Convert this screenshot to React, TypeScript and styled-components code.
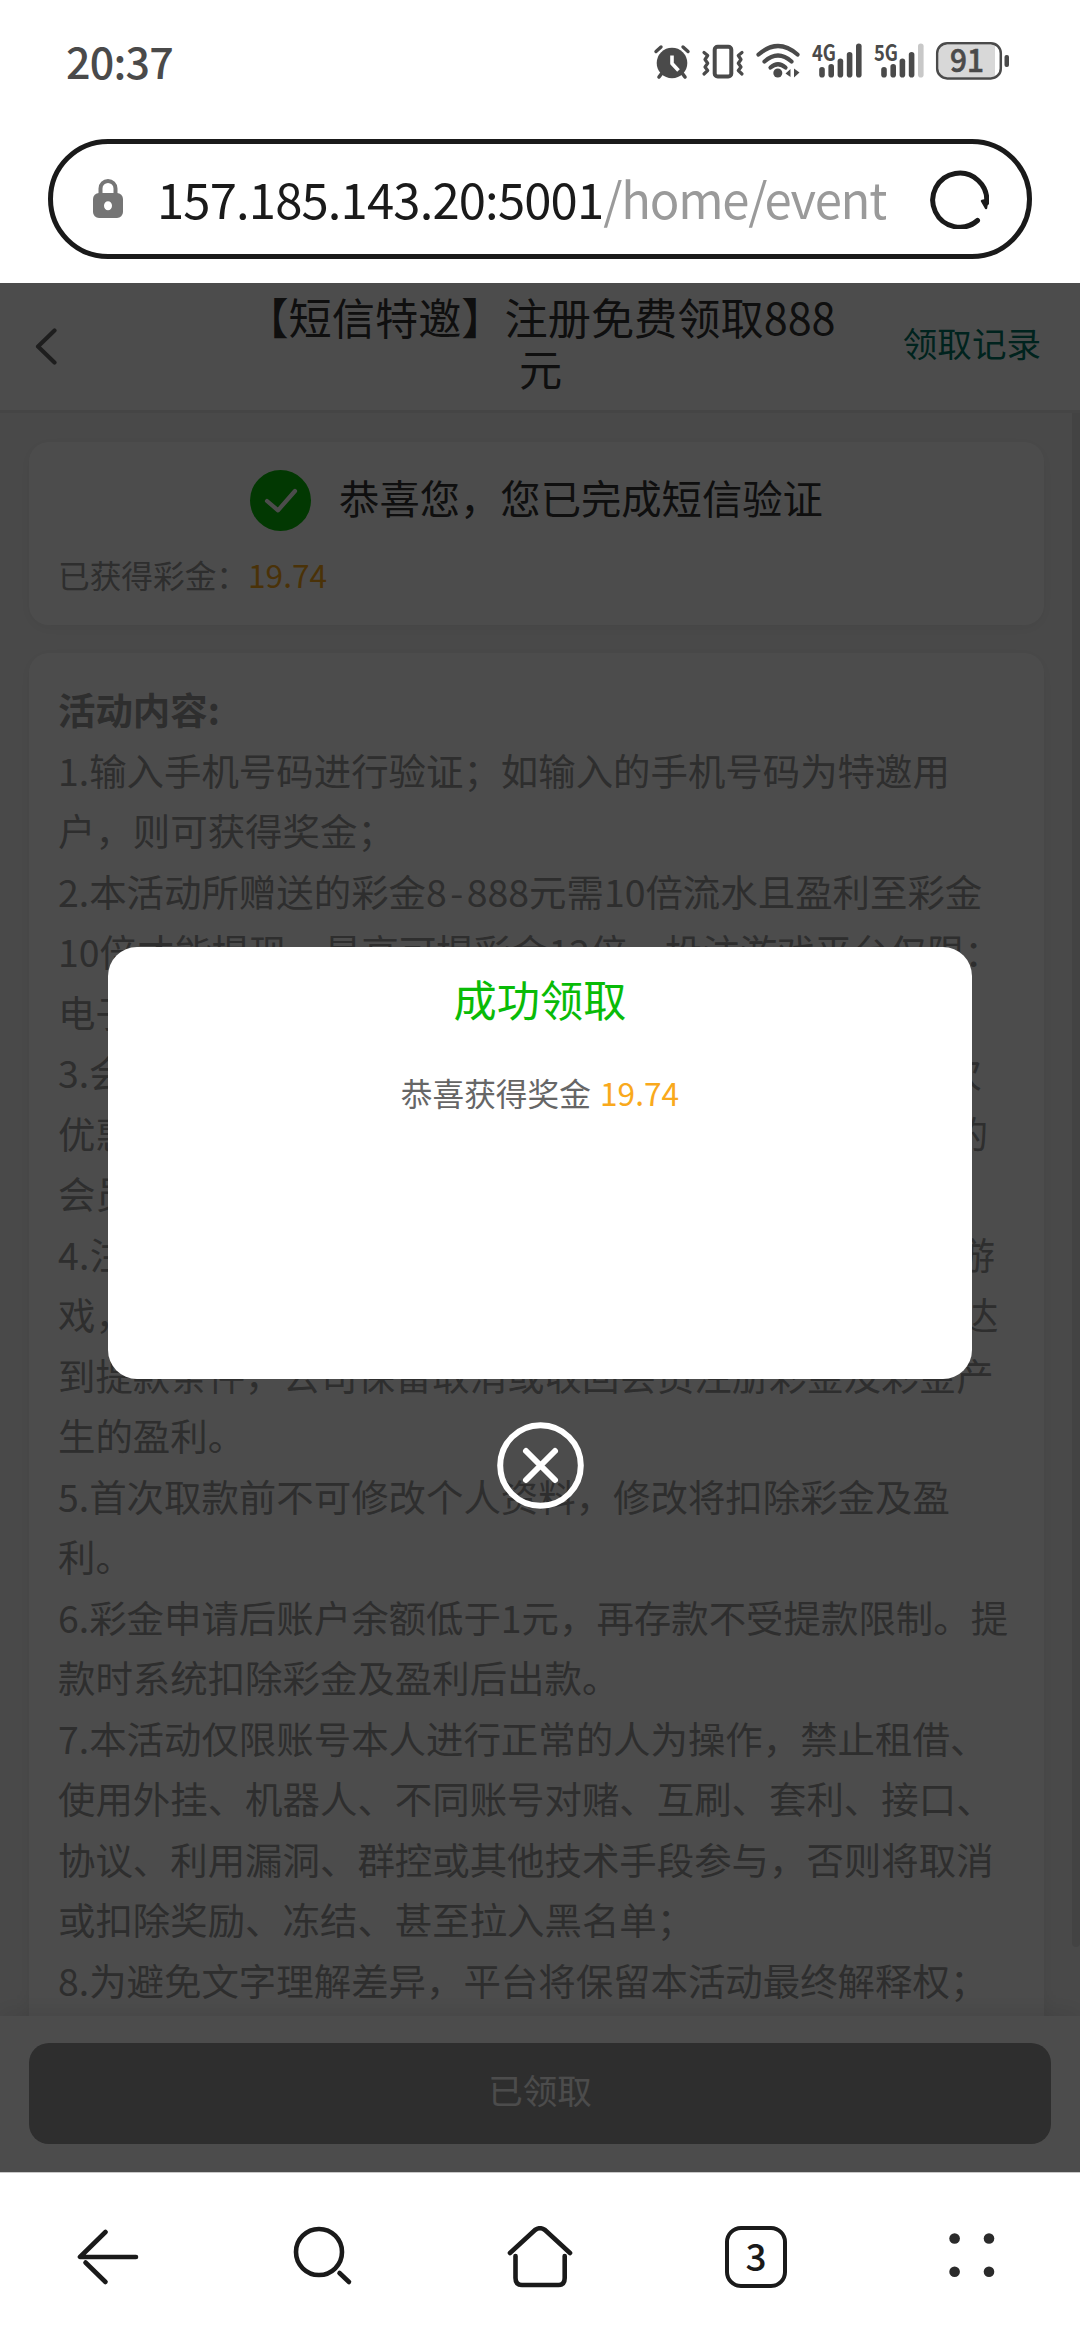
import React from "react";
import styled, { createGlobalStyle } from "styled-components";

const GlobalStyle = createGlobalStyle`
  * { box-sizing: border-box; }
  html, body { margin: 0; padding: 0; background: #fff; }
  body {
    width: 1080px;
    height: 2340px;
    overflow: hidden;
    font-family: "Noto Sans CJK SC", "Noto Sans", sans-serif;
  }
`;

const Screen = styled.div`
  width: 1080px;
  height: 2340px;
  display: flex;
  flex-direction: column;
  background: #fff;
`;

const StatusBar = styled.div`
  height: 139px;
  padding: 42px 71px 0 66px;
  display: flex;
  justify-content: space-between;
  align-items: flex-start;
`;

const Clock = styled.div`
  margin-top: -2px;
  font-size: 43px;
  line-height: 40px;
  letter-spacing: -0.8px;
  color: #4a4a4a;
  font-weight: 500;
`;

const StatusIcons = styled.div`
  display: flex;
  align-items: flex-start;
  gap: 12px;
  svg { display: block; overflow: visible; }
`;

const AddressBar = styled.div`
  height: 120px;
  margin: 0 48px 24px;
  padding: 0 38px 0 40px;
  border: 5px solid #1a1a1a;
  border-radius: 60px;
  display: flex;
  align-items: center;
  flex-shrink: 0;
  svg { display: block; flex-shrink: 0; }
`;

const Url = styled.div`
  width: 730px;
  margin-left: 34px;
  margin-right: 43px;
  padding-bottom: 3px;
  overflow: hidden;
  white-space: nowrap;
  font-size: 49px;
  line-height: 80px;
  letter-spacing: -0.85px;
  color: #1a1a1a;
`;

const UrlPath = styled.span`
  color: #9a9a9a;
  letter-spacing: -1.25px;
`;

const Page = styled.div`
  position: relative;
  height: 1889px;
  flex-shrink: 0;
  overflow: hidden;
  display: flex;
  flex-direction: column;
  background: #f5f5f5;
`;

const Header = styled.div`
  height: 130px;
  flex-shrink: 0;
  padding: 0 39px 0 34px;
  border-bottom: 3px solid #e6e6e6;
  background: #fff;
  display: grid;
  grid-template-columns: 140px 1fr 140px;
  align-items: center;
`;

const Title = styled.div`
  width: 640px;
  justify-self: center;
  margin-left: 6px;
  padding-bottom: 9px;
  text-align: center;
  white-space: nowrap;
  font-size: 43.2px;
  line-height: 51px;
  color: #333;
`;

const HeaderLink = styled.div`
  padding-bottom: 10px;
  justify-self: end;
  white-space: nowrap;
  font-size: 34.56px;
  line-height: 46px;
  color: #007564;
`;

const Content = styled.div`
  flex: 1;
  min-height: 0;
  overflow: hidden;
  padding: 29px 36.5px 0 29px;
  display: flex;
  flex-direction: column;
  gap: 28px;
`;

const Card = styled.div`
  flex-shrink: 0;
  border-radius: 20px;
  background: #fff;
  box-shadow: 0 3px 16px rgba(0, 0, 0, 0.06);
`;

const StatusCard = styled(Card)`
  height: 183px;
  padding: 28px 29px;
`;

const VerifyRow = styled.div`
  height: 61px;
  display: flex;
  justify-content: center;
  align-items: center;
  gap: 28.5px;
`;

const VerifyText = styled.div`
  padding-bottom: 7px;
  font-size: 40.32px;
  line-height: 54px;
  color: #333;
`;

const BonusRow = styled.div`
  margin-top: 20px;
  font-size: 31.68px;
  line-height: 46px;
  color: #999;
`;

const Amount = styled.span`
  color: #f9a91c;
`;

const RulesCard = styled(Card)`
  height: 1500px;
  padding: 26px 29px;
  font-size: 37.44px;
  color: #999;
`;

const RulesHeading = styled.div`
  line-height: 60.5px;
  font-weight: 700;
`;

const RuleLine = styled.div<{ $tracking?: number }>`
  line-height: 60.5px;
  white-space: nowrap;
  letter-spacing: ${(p) => p.$tracking ?? 0}px;
`;

const RangeDash = styled.span`
  display: inline-block;
  width: 20px;
  text-align: center;
`;

const ScrollThumb = styled.div`
  position: absolute;
  right: 0;
  top: 130px;
  width: 8px;
  height: 1534px;
  border-radius: 0 0 4px 4px;
  background: #e0e0e0;
`;

const Footer = styled.div`
  height: 156px;
  flex-shrink: 0;
  padding: 27px 29px 28px;
  background: #fff;
  box-shadow: 0 -3px 24px rgba(0, 0, 0, 0.1);
  z-index: 1;
`;

const ClaimedButton = styled.div`
  height: 101px;
  padding-bottom: 9px;
  border-radius: 20px;
  background: #999;
  color: #fff;
  font-size: 34.56px;
  display: flex;
  align-items: center;
  justify-content: center;
`;

const Overlay = styled.div`
  position: absolute;
  inset: 0;
  z-index: 2;
  padding-top: 664px;
  background: rgba(0, 0, 0, 0.7);
  display: flex;
  flex-direction: column;
  align-items: center;
  gap: 43px;
`;

const Modal = styled.div`
  width: 864px;
  height: 432px;
  padding-top: 25px;
  border-radius: 29px;
  background: #fff;
  text-align: center;
`;

const ModalTitle = styled.div`
  font-size: 43.2px;
  line-height: 52px;
  color: #09bb07;
`;

const ModalText = styled.div`
  margin-top: 44px;
  font-size: 31.68px;
  line-height: 48px;
  word-spacing: 2px;
  color: #666;
`;

const NavBar = styled.div`
  height: 168px;
  padding-top: 53px;
  border-top: 1px solid #c8c8c8;
  display: grid;
  grid-template-columns: repeat(5, 1fr);
  justify-items: center;
  align-items: start;
  svg { display: block; }
`;

const TabCount = styled.div`
  width: 62px;
  height: 62px;
  border: 4.5px solid #1a1a1a;
  border-radius: 16px;
  padding-bottom: 5px;
  display: flex;
  align-items: center;
  justify-content: center;
  font-size: 37px;
  line-height: 48px;
  font-weight: 500;
  color: #1a1a1a;
`;

const INK = "#4a4a4a";

const AlarmIcon = () => (
  <svg width="36" height="38" viewBox="654 42 36 38" fill="none" stroke={INK} strokeLinecap="round">
    <circle cx="672" cy="63" r="15.3" fill={INK} stroke="none" />
    <path d="M656 51.5l5-4.5M683 47l5 4.5" strokeWidth="3.4" />
    <path d="M662 73l-3 4M682 73l3 4" strokeWidth="3.6" />
    <path d="M672 55.500v8l6.500 7" stroke="#fff" strokeWidth="3.600" strokeLinejoin="round" strokeLinecap="butt" />
  </svg>
);

const VibrateIcon = () => (
  <svg width="42" height="38" viewBox="702 42 42 38" fill="none" stroke={INK} strokeLinecap="round" strokeLinejoin="round">
    <rect x="714.7" y="46.800" width="16.6" height="29.600" rx="3" strokeWidth="4" />
    <path d="M704 52.500l3.700 3-2.700 4 2.700 3.800-2.700 3.700 2.700 3.500-3.700 3.500" strokeWidth="3.200" />
    <path d="M742 52.500l-3.700 3 2.700 4-2.700 3.800 2.700 3.700-2.700 3.500 3.700 3.500" strokeWidth="3.200" />
  </svg>
);

const WifiIcon = () => (
  <svg width="44" height="38" viewBox="756 42 44 38" fill="none" stroke={INK} strokeWidth="4.200" strokeLinecap="round">
    <path d="M758.500 54.500Q778 37.500 797.500 54.500" />
    <path d="M764.500 61.500Q778 49.500 791.500 61.500" />
    <path d="M770.500 67.500Q778 61 785.500 67.500" />
    <circle cx="777.800" cy="73" r="4.500" fill={INK} stroke="none" />
    <path d="M785.500 73.500l5-4.500v8zM799.500 72.500l-5.500-4v9z" fill={INK} stroke="none" />
  </svg>
);

const SignalIcon = ({ label, x, weak }: { label: string; x: number; weak?: boolean }) => (
  <svg width="50" height="38" viewBox="812 42 50 38">
    <text
      x="812"
      y="60.500"
      fontSize="22.500"
      fontWeight="700"
      fontFamily='"Noto Sans CJK SC", sans-serif'
      textLength="24"
      lengthAdjust="spacingAndGlyphs"
      fill={INK}
    >
      {label}
    </text>
    {[67, 64, 58.500, 52, 43.500].map((top, i) => (
      <rect
        key={i}
        x={x + i * 9.2}
        y={top}
        width="5.600"
        height={77.500 - top}
        rx="2.800"
        fill={weak && i === 4 ? "#c8c8c8" : INK}
      />
    ))}
  </svg>
);

const BatteryIcon = () => (
  <svg width="73" height="38" viewBox="936 42 73 38">
    <path d="M945 45H995V77H945Q939 77 939 69V53Q939 45 945 45Z" fill="#d8d8d8" />
    <rect x="937.200" y="43.200" width="63.600" height="35.200" rx="10" fill="none" stroke={INK} strokeWidth="2.500" />
    <rect x="1004.500" y="55" width="4.500" height="12" rx="2" fill={INK} />
    <text
      x="967"
      y="72"
      fontSize="32"
      fontWeight="500"
      textAnchor="middle"
      textLength="34"
      lengthAdjust="spacingAndGlyphs"
      fontFamily='"Noto Sans CJK SC", sans-serif'
      fill={INK}
      stroke={INK}
      strokeWidth="0.600"
    >
      91
    </text>
  </svg>
);

const LockIcon = () => (
  <svg width="30" height="40" viewBox="93 180 30 40">
    <path d="M100.500 196v-6.500a7.500 7.500 0 0 1 15 0V196" fill="none" stroke="#757575" strokeWidth="4" />
    <path
      fillRule="evenodd"
      fill="#757575"
      d="M99 194h18a6 6 0 0 1 6 6v13a6 6 0 0 1-6 6H99a6 6 0 0 1-6-6v-13a6 6 0 0 1 6-6zM108 202.200a4 4.500 0 1 0 0 9 4 4.500 0 1 0 0-9z"
    />
  </svg>
);

const ReloadIcon = () => (
  <svg width="60" height="60" viewBox="929 169 60 60" fill="none" stroke="#1a1a1a" strokeWidth="5" strokeLinecap="round">
    <path d="M977.500 220.500A27 27 0 1 1 986.600 203" />
    <path d="M982 201l5-1-1 8z" fill="#1a1a1a" strokeWidth="2.500" strokeLinejoin="round" />
  </svg>
);

const BackChevron = () => (
  <svg width="24" height="38" viewBox="34 328 24 38" fill="none" stroke="#666" strokeWidth="4.200" strokeLinecap="round" strokeLinejoin="round">
    <path d="M54.500 330.500L38 346.500l16.500 16" />
  </svg>
);

const CheckIcon = () => (
  <svg width="61" height="61" viewBox="0 0 61 61" fill="none">
    <circle cx="30.500" cy="30.500" r="30.500" fill="#09bb07" />
    <path d="M17 31l11 9.300L45 21" stroke="#fff" strokeWidth="4.200" strokeLinecap="round" strokeLinejoin="round" />
  </svg>
);

const CloseIcon = () => (
  <svg width="87" height="87" viewBox="0 0 87 87" fill="none" stroke="#fff" strokeWidth="6" strokeLinecap="round">
    <circle cx="43.500" cy="43.500" r="40.300" />
    <path d="M29 29l29 29M58 29L29 58" />
  </svg>
);

const RULES: { text: React.ReactNode; tracking?: number }[] = [
  { text: "1.输入手机号码进行验证；如输入的手机号码为特邀用" },
  { text: "户，则可获得奖金；" },
  {
    text: (
      <>
        2.本活动所赠送的彩金8<RangeDash>-</RangeDash>888元需10倍流水且盈利至彩金
      </>
    ),
  },
  { text: "10倍才能提现，最高可提彩金12倍，投注游戏平台仅限：" },
  { text: "电子、棋牌、捕鱼；" },
  { text: "3.会员同一姓名、手机号、银行卡、IP仅能享受领取一次", tracking: -0.1 },
  { text: "优惠，如发现同一IP或设备存在多个账号重复申请优惠的", tracking: -0.1 },
  { text: "会员，平台有权取消彩金；" },
  { text: "4.注册彩金仅限于指定的平台进行投注，如参与其他的游", tracking: 0.3 },
  { text: "戏，彩金及盈利将予以扣除，请会员于有效期之内尽快达", tracking: 0.2 },
  { text: "到提款条件，公司保留取消或收回会员注册彩金及彩金产" },
  { text: "生的盈利。" },
  { text: "5.首次取款前不可修改个人资料，修改将扣除彩金及盈" },
  { text: "利。" },
  { text: "6.彩金申请后账户余额低于1元，再存款不受提款限制。提" },
  { text: "款时系统扣除彩金及盈利后出款。" },
  { text: "7.本活动仅限账号本人进行正常的人为操作，禁止租借、" },
  { text: "使用外挂、机器人、不同账号对赌、互刷、套利、接口、" },
  { text: "协议、利用漏洞、群控或其他技术手段参与，否则将取消" },
  { text: "或扣除奖励、冻结、甚至拉入黑名单；" },
  { text: "8.为避免文字理解差异，平台将保留本活动最终解释权；" },
];

export default function App() {
  return (
    <>
      <GlobalStyle />
      <Screen>
        <StatusBar>
          <Clock>20:37</Clock>
          <StatusIcons>
            <AlarmIcon />
            <VibrateIcon />
            <WifiIcon />
            <SignalIcon label="4G" x={819.2} />
            <SignalIcon label="5G" x={819.2} weak />
            <BatteryIcon />
          </StatusIcons>
        </StatusBar>
        <AddressBar>
          <LockIcon />
          <Url>
            157.185.143.20:5001<UrlPath>/home/event</UrlPath>
          </Url>
          <ReloadIcon />
        </AddressBar>
        <Page>
          <Header>
            <BackChevron />
            <Title>
              【短信特邀】注册免费领取888
              <br />元
            </Title>
            <HeaderLink>领取记录</HeaderLink>
          </Header>
          <Content>
            <StatusCard>
              <VerifyRow>
                <CheckIcon />
                <VerifyText>恭喜您，您已完成短信验证</VerifyText>
              </VerifyRow>
              <BonusRow>
                已获得彩金：<Amount>19.74</Amount>
              </BonusRow>
            </StatusCard>
            <RulesCard>
              <RulesHeading>活动内容:</RulesHeading>
              {RULES.map((rule, i) => (
                <RuleLine key={i} $tracking={rule.tracking}>
                  {rule.text}
                </RuleLine>
              ))}
            </RulesCard>
          </Content>
          <ScrollThumb />
          <Footer>
            <ClaimedButton>已领取</ClaimedButton>
          </Footer>
          <Overlay>
            <Modal>
              <ModalTitle>成功领取</ModalTitle>
              <ModalText>
                恭喜获得奖金 <Amount>19.74</Amount>
              </ModalText>
            </Modal>
            <CloseIcon />
          </Overlay>
        </Page>
        <NavBar>
          <svg width="62" height="62" viewBox="77 2226 62 62" fill="none" stroke="#1a1a1a" strokeWidth="4.600" strokeLinecap="round" strokeLinejoin="round">
            <path d="M105.500 2232L80 2257H136" />
            <path d="M85.500 2262.500L105.500 2282" />
          </svg>
          <svg width="62" height="62" viewBox="293 2226 62 62" fill="none" stroke="#1a1a1a" strokeWidth="4.600" strokeLinecap="round">
            <circle cx="319" cy="2252" r="23" />
            <path d="M339.500 2273l9.500 9" />
          </svg>
          <svg width="66" height="62" viewBox="507 2226 66 62" fill="none" stroke="#1a1a1a" strokeWidth="4.600" strokeLinecap="round" strokeLinejoin="round">
            <path d="M510 2253L535 2230Q540 2226.500 545 2230L570 2253" />
            <path d="M515.500 2256V2278Q515.500 2285 522 2285H558.500Q564.700 2285 564.700 2278V2256" />
          </svg>
          <TabCount>3</TabCount>
          <svg width="62" height="62" viewBox="941 2226 62 62" fill="#2b2b2b">
            <circle cx="954.600" cy="2238.500" r="5.300" />
            <circle cx="989" cy="2238.500" r="5.300" />
            <circle cx="954.600" cy="2271.700" r="5.300" />
            <circle cx="989" cy="2271.700" r="5.300" />
          </svg>
        </NavBar>
      </Screen>
    </>
  );
}
